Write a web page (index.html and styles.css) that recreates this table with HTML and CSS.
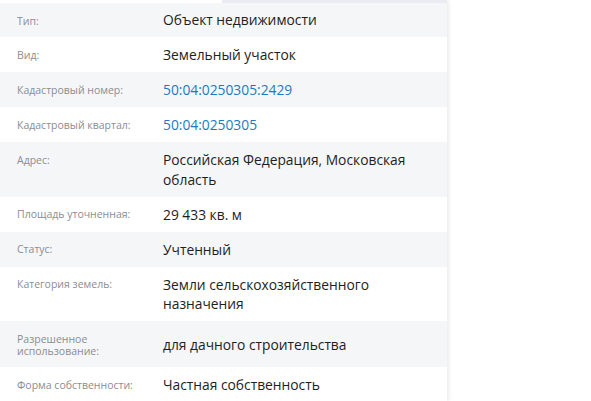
FILE: index.html
```html
<!DOCTYPE html>
<html lang="ru">
<head>
  <meta charset="UTF-8" />
  <meta name="viewport" content="width=device-width, initial-scale=1.0"/>
  <title>Объект недвижимости</title>
  <link rel="stylesheet" href="styles.css">
</head>
<body>
  <div class="panel">
    <div class="panel-top"><span class="panel-top-tab"></span></div>

    <!-- характеристики объекта -->
    <dl class="props">
      <div class="prop-row">
        <dt class="prop-label">Тип:</dt>
        <dd class="prop-value">Объект недвижимости</dd>
      </div>
      <div class="prop-row">
        <dt class="prop-label">Вид:</dt>
        <dd class="prop-value">Земельный участок</dd>
      </div>
      <div class="prop-row">
        <dt class="prop-label">Кадастровый номер:</dt>
        <dd class="prop-value"><a href="#">50:04:0250305:2429</a></dd>
      </div>
      <div class="prop-row">
        <dt class="prop-label">Кадастровый квартал:</dt>
        <dd class="prop-value"><a href="#">50:04:0250305</a></dd>
      </div>
      <div class="prop-row">
        <dt class="prop-label">Адрес:</dt>
        <dd class="prop-value">Российская Федерация, Московская область</dd>
      </div>
      <div class="prop-row">
        <dt class="prop-label">Площадь уточненная:</dt>
        <dd class="prop-value">29 433 кв. м</dd>
      </div>
      <div class="prop-row">
        <dt class="prop-label">Статус:</dt>
        <dd class="prop-value">Учтенный</dd>
      </div>
      <div class="prop-row">
        <dt class="prop-label">Категория земель:</dt>
        <dd class="prop-value">Земли сельскохозяйственного назначения</dd>
      </div>
      <div class="prop-row">
        <dt class="prop-label">Разрешенное использование:</dt>
        <dd class="prop-value">для дачного строительства</dd>
      </div>
      <div class="prop-row">
        <dt class="prop-label">Форма собственности:</dt>
        <dd class="prop-value">Частная собственность</dd>
      </div>
    </dl>
  </div>
</body>
</html>
```

FILE: styles.css
```css
    * { box-sizing: border-box; margin: 0; padding: 0; }
    body {
      font-family: 'Open Sans', 'Noto Sans', sans-serif;
      background: #fff;
      color: #1e1e1e;
      overflow: hidden;
    }
    .panel {
      width: 447px;
      height: 100vh;
      background: #fff;
      box-shadow: 2px 0 4px rgba(0, 0, 0, 0.08);
    }
    .panel-top {
      height: 3px;
      background: #ebecf3;
    }
    .panel-top-tab {
      display: block;
      width: 222px;
      height: 100%;
      background: #fff;
    }
    .props {
      display: flex;
      flex-direction: column;
    }
    .prop-row {
      display: flex;
      align-items: center;
    }
    .prop-row:nth-child(odd) {
      background: #f5f6f8;
    }
    .prop-row:first-child .prop-value {
      padding-top: 7px;
    }
    .prop-label {
      flex: 0 0 163px;
      align-self: flex-start;
      padding: 11.5px 14px 10.5px 17px;
      font-size: 10.5px;
      line-height: 12px;
      color: #8a8d93;
    }
    .prop-value {
      flex: 1;
      padding: 7.75px 20px 7.75px 0;
      font-size: 13.8px;
      line-height: 19.5px;
      color: #1e1e1e;
    }
    .prop-value a {
      color: #1a7ac4;
      text-decoration: none;
    }
```
